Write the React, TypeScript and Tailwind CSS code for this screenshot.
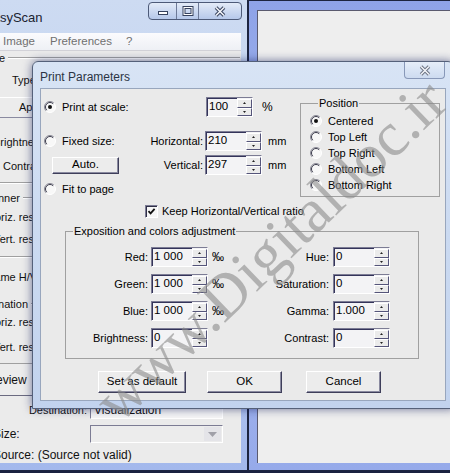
import React from "react";

function Radio({ checked = false }: { checked?: boolean }) {
  return (
    <svg width="12" height="12" viewBox="0 0 12 12" className="shrink-0">
      <circle cx="6" cy="6" r="5.5" fill="#f8f8f8" />
      <path d="M2.1 9.9A5.5 5.5 0 0 1 9.9 2.1" fill="none" stroke="#8a8a96" strokeWidth="1" />
      <path d="M2.8 9.2A4.5 4.5 0 0 1 9.2 2.8" fill="none" stroke="#3c3c4c" strokeWidth="1" />
      <path d="M9.9 2.1A5.5 5.5 0 0 1 2.1 9.9" fill="none" stroke="#ffffff" strokeWidth="1" />
      {checked && <circle cx="6" cy="6" r="2" fill="#111" />}
    </svg>
  );
}

function SpinArrow({ up = false }: { up?: boolean }) {
  return (
    <div className="flex flex-1 items-center justify-center border border-t-white border-l-white border-r-[#55557a] border-b-[#55557a] bg-[#ebebeb]">
      <svg width="3" height="2" viewBox="0 0 3 2">
        <path d={up ? "M1.5 0L3 2H0Z" : "M0 0H3L1.5 2Z"} fill="#222" />
      </svg>
    </div>
  );
}

function Spin({ value, w }: { value: string; w: string }) {
  return (
    <div className={`flex h-[20px] shrink-0 border border-t-[#7c7c94] border-l-[#7c7c94] border-r-white border-b-white ${w}`}>
      <div className="flex-1 bg-[#f3f3f5] pl-[2px] pt-[2px] text-[11.5px] leading-[13px] text-black shadow-[inset_1px_1px_0_#34345a]">
        {value}
      </div>
      <div className="flex w-[15px] flex-col bg-[#f3f3f5] pt-[1px]">
        <SpinArrow up />
        <SpinArrow />
      </div>
    </div>
  );
}

function Btn({ label, w, h = "h-[22px]" }: { label: string; w: string; h?: string }) {
  return (
    <div
      className={`flex shrink-0 items-center justify-center border border-t-white border-l-white border-b-[#3e3e5a] border-r-[#3e3e5a] bg-[#ececec] text-[11.5px] shadow-[inset_-1px_-1px_0_#8a8aa0] ${w} ${h}`}
    >
      {label}
    </div>
  );
}

function Glyph({ kind }: { kind: "min" | "max" | "close" }) {
  if (kind === "min")
    return (
      <svg width="12" height="10" viewBox="0 0 12 10">
        <rect x="1.5" y="5.5" width="9" height="3" fill="#fff" stroke="#36425e" />
      </svg>
    );
  if (kind === "max")
    return (
      <svg width="12" height="10" viewBox="0 0 12 10">
        <rect x="2" y="1.5" width="8" height="7" fill="none" stroke="#36425e" strokeWidth="3" />
        <rect x="2" y="1.5" width="8" height="7" fill="none" stroke="#fff" strokeWidth="1" />
      </svg>
    );
  return (
    <svg width="14" height="11" viewBox="0 0 14 11">
      <path d="M3 1.5L11 9.5M11 1.5L3 9.5" stroke="#36425e" strokeWidth="3.6" />
      <path d="M3 1.5L11 9.5M11 1.5L3 9.5" stroke="#f4f6fa" strokeWidth="1.6" />
    </svg>
  );
}

function GroupRow({
  label,
  value,
  unit,
  label2,
  value2,
}: {
  label: string;
  value: string;
  unit?: string;
  label2: string;
  value2: string;
}) {
  return (
    <div className="flex h-[20px] items-center">
      <span className="w-[82px] text-right">{label}</span>
      <div className="ml-[3px]">
        <Spin value={value} w="w-[57px]" />
      </div>
      <span className="ml-[4px] w-[20px] text-[12px]">{unit}</span>
      <span className="w-[97px] text-right">{label2}</span>
      <div className="ml-[4px]">
        <Spin value={value2} w="w-[57px]" />
      </div>
    </div>
  );
}

function EtchedLine() {
  return <div className="h-[2px] shrink-0 border-t border-b border-t-[#a0a0a0] border-b-white" />;
}

function BgLabel({ text, ml, mt }: { text: string; ml: string; mt: string }) {
  return <div className={`h-[14px] shrink-0 whitespace-nowrap leading-[14px] ${ml} ${mt}`}>{text}</div>;
}

export default function App() {
  return (
    <div className="relative h-[473px] w-[450px] overflow-hidden bg-[#1a2240] font-['Liberation_Sans',Arial,sans-serif] text-[11px] text-black">
      {/* EasyScan main window (left) */}
      <div className="absolute left-[-60px] top-0 flex h-[471px] w-[308px] flex-col border-r border-b border-[#1c2440] bg-gradient-to-b from-[#cddbf2] via-[#bfd0ef] to-[#a3b8ec]">
        <div className="flex h-[33px] shrink-0 items-start">
          <span className="ml-[44px] mt-[8px] text-[13px] text-[#1b2330]">EasyScan</span>
          <div className="ml-auto mr-[5px] mt-[2px] flex h-[18px] overflow-hidden rounded-[4px] border border-[#4d5a78] bg-gradient-to-b from-[#e3ebf8] to-[#b6c8ea]">
            <div className="flex w-[28px] items-center justify-center border-r border-[#6d7a98]">
              <Glyph kind="min" />
            </div>
            <div className="flex w-[22px] items-center justify-center border-r border-[#6d7a98]">
              <Glyph kind="max" />
            </div>
            <div className="flex w-[42px] items-center justify-center">
              <Glyph kind="close" />
            </div>
          </div>
        </div>
        <div className="mr-[6px] mb-[7px] flex flex-1 flex-col overflow-hidden bg-[#ebebeb] text-[#111]">
          <div className="flex h-[18px] shrink-0 items-center border-b border-[#d2d2d8] bg-gradient-to-b from-[#fbfbfd] to-[#eef0f5] text-[11.5px] text-[#707070]">
            <span className="ml-[63px]">Image</span>
            <span className="ml-[15px]">Preferences</span>
            <span className="ml-[14px]">?</span>
          </div>
          <div className="flex h-[14px] shrink-0 items-center">
            <span className="w-[65px] text-right leading-[14px]">Source</span>
            <div className="ml-[3px] mr-[1px] h-[2px] flex-1 border-t border-b border-t-[#a0a0a0] border-b-white" />
          </div>
          <BgLabel text="Type:" ml="ml-[72px]" mt="mt-[8px]" />
          <div className="mt-[10px] flex h-[21px] shrink-0 items-center border border-t-white border-b-[#8a8aa0] bg-[#ececec] pl-[78px]">
            Apply
          </div>
          <BgLabel text="Brightness" ml="ml-[53px]" mt="mt-[17px]" />
          <BgLabel text="Contrast" ml="ml-[63px]" mt="mt-[10px]" />
          <div className="mt-[9px]">
            <EtchedLine />
          </div>
          <div className="mt-[7px] flex h-[14px] shrink-0 items-center">
            <span className="ml-[39px] leading-[14px]">Scanner</span>
            <div className="ml-[3px] mr-[1px] h-[2px] flex-1 border-t border-b border-t-[#a0a0a0] border-b-white" />
          </div>
          <BgLabel text="Horiz. resolution" ml="ml-[47px]" mt="mt-[5px]" />
          <BgLabel text="Vert. resolution" ml="ml-[53px]" mt="mt-[8px]" />
          <div className="mt-[10px]">
            <EtchedLine />
          </div>
          <BgLabel text="Same H/V resolution" ml="ml-[47px]" mt="mt-[12px]" />
          <div className="mt-[13px] flex h-[14px] shrink-0 items-center">
            <span className="ml-[33px] leading-[14px]">Destination</span>
            <div className="ml-[3px] mr-[1px] h-[2px] flex-1 border-t border-b border-t-[#a0a0a0] border-b-white" />
          </div>
          <BgLabel text="Horiz. resolution" ml="ml-[47px]" mt="mt-[4px]" />
          <BgLabel text="Vert. resolution" ml="ml-[53px]" mt="mt-[11px]" />
          <div className="mt-[9px] flex h-[33px] shrink-0 items-center border border-t-[#a0a0a0] border-b-[#6a6a80] bg-[#ececec] pl-[43px] text-[12px]">
            Preview
          </div>
          <div className="mt-[5px] flex h-[18px] shrink-0 items-center">
            <span className="ml-[87px] w-[60px] whitespace-nowrap text-right text-[11px]">Destination:</span>
            <div className="ml-[3px] flex h-[18px] w-[133px] items-center border border-t-[#7c7c94] border-l-[#7c7c94] border-b-white border-r-white bg-[#f6f6f6] pl-[3px] text-[12px]">
              Visualization
            </div>
          </div>
          <div className="mt-[6px] flex h-[18px] shrink-0 items-center">
            <span className="ml-[53px] w-[97px] text-[12px]">Size:</span>
            <div className="flex h-[18px] w-[133px] items-center justify-end border border-t-[#7c7c94] border-l-[#7c7c94] border-b-white border-r-white bg-[#ececec] pr-[1px]">
              <div className="flex h-[14px] w-[17px] items-center justify-center bg-[#e4e4e8]">
                <svg width="9" height="5" viewBox="0 0 9 5">
                  <path d="M0 0H9L4.5 5Z" fill="#a0a0a8" />
                </svg>
              </div>
            </div>
          </div>
          <div className="mt-[5px] h-[14px] shrink-0 pl-[53px] text-[12px] leading-[14px]">Source: (Source not valid)</div>
        </div>
      </div>

      {/* second window (right) */}
      <div className="absolute left-[248px] top-0 flex h-[471px] w-[210px] flex-col border-l border-t border-b border-[#1c2440] bg-gradient-to-b from-[#8ea3e8] via-[#a8b9ee] to-[#96aaea] pl-[8px] pt-[9px] pb-[7px]">
        <div className="flex-1 border-t border-l border-[#5a5a6e] bg-[#eeeeee]" />
      </div>

      {/* Print Parameters dialog */}
      <div className="absolute left-[32px] top-[61px] flex h-[348px] w-[422px] flex-col rounded-t-[6px] border border-[#55617a] bg-gradient-to-b from-[#d8e4f5] via-[#cbdaf1] to-[#c2d3ee] shadow-[0_0_10px_rgba(20,30,90,0.6)]">
        <div className="flex h-[26px] shrink-0 items-start justify-between pl-[7px] pr-[8px]">
          <span className="mt-[6px] text-[12px] text-[#2c3444]">Print Parameters</span>
          <div className="flex h-[17px] w-[41px] items-center justify-center rounded-b-[4px] border border-t-0 border-[#8898b8] bg-gradient-to-b from-[#e6eef9] to-[#cddbf0]">
            <svg width="14" height="11" viewBox="0 0 14 11">
              <path d="M3 1.5L11 9.5M11 1.5L3 9.5" stroke="#6a7282" strokeWidth="3.4" />
              <path d="M3 1.5L11 9.5M11 1.5L3 9.5" stroke="#f4f6fa" strokeWidth="1.5" />
            </svg>
          </div>
        </div>
        <div className="mx-[7px] mb-[7px] flex flex-1 flex-col border border-[#98a6bd] bg-[#eaeaea] pt-[8px]">
          {/* top section */}
          <div className="flex">
            <div className="flex w-[259px] flex-col">
              <div className="flex h-[20px] items-center">
                <div className="ml-[3px] flex w-[161px] items-center gap-[6px]">
                  <Radio checked />
                  <span>Print at scale:</span>
                </div>
                <div className="ml-[1px]">
                  <Spin value="100" w="w-[47px]" />
                </div>
                <span className="ml-[9px] text-[12px]">%</span>
              </div>
              <div className="mt-[14px] flex h-[20px] items-center">
                <div className="ml-[3px] flex w-[161px] items-center gap-[6px]">
                  <Radio />
                  <span>Fixed size:</span>
                  <span className="ml-auto pr-[2px]">Horizontal:</span>
                </div>
                <Spin value="210" w="w-[57px]" />
                <span className="ml-[6px]">mm</span>
              </div>
              <div className="mt-[4px] flex h-[20px] items-center">
                <div className="ml-[3px] flex w-[161px] items-center">
                  <div className="ml-[8px]">
                    <Btn label="Auto." w="w-[67px]" h="h-[17px]" />
                  </div>
                  <span className="ml-auto pr-[2px]">Vertical:</span>
                </div>
                <Spin value="297" w="w-[57px]" />
                <span className="ml-[6px]">mm</span>
              </div>
              <div className="mt-[4px] flex h-[20px] items-center">
                <div className="ml-[3px] flex items-center gap-[6px]">
                  <Radio />
                  <span>Fit to page</span>
                </div>
              </div>
            </div>
            <fieldset className="h-[100px] w-[140px] border border-[#a0a0a0] pt-[3px] pl-[9px]">
              <legend className="ml-[8px] px-[1px] leading-[13px]">Position</legend>
              {["Centered", "Top Left", "Top Right", "Bottom Left", "Bottom Right"].map((p, i) => (
                <div key={p} className="flex h-[16px] items-center gap-[6px]">
                  <Radio checked={i === 0} />
                  <span>{p}</span>
                </div>
              ))}
            </fieldset>
          </div>

          {/* keep ratio */}
          <div className="mt-[2px] flex h-[20px] items-center pl-[104px]">
            <span className="flex h-[13px] w-[13px] items-center justify-center border border-t-[#7c7c94] border-l-[#7c7c94] border-b-white border-r-white bg-[#f6f6f6] shadow-[inset_1px_1px_0_#303048]">
              <svg width="9" height="9" viewBox="0 0 9 9">
                <path d="M1.5 4.2L3.6 6.4L7.6 1.8" fill="none" stroke="#111" strokeWidth="1.8" />
              </svg>
            </span>
            <span className="ml-[4px]">Keep Horizontal/Vertical ratio</span>
          </div>

          {/* exposition group */}
          <fieldset className="ml-[24px] mt-[4px] h-[134px] w-[354px] border border-[#a0a0a0]">
            <legend className="ml-[7px] px-[1px] leading-[13px]">Exposition and colors adjustment</legend>
            <div className="mt-[9px] flex flex-col gap-[7px]">
              <GroupRow label="Red:" value="1 000" unit="‰" label2="Hue:" value2="0" />
              <GroupRow label="Green:" value="1 000" unit="‰" label2="Saturation:" value2="0" />
              <GroupRow label="Blue:" value="1 000" unit="‰" label2="Gamma:" value2="1.000" />
              <GroupRow label="Brightness:" value="0" label2="Contrast:" value2="0" />
            </div>
          </fieldset>

          {/* buttons */}
          <div className="mt-[12px] flex">
            <div className="ml-[57px]">
              <Btn label="Set as default" w="w-[88px]" />
            </div>
            <div className="ml-[21px]">
              <Btn label="OK" w="w-[75px]" />
            </div>
            <div className="ml-[24px]">
              <Btn label="Cancel" w="w-[75px]" />
            </div>
          </div>
        </div>
      </div>

      {/* watermark */}
      <div className="pointer-events-none absolute left-[30px] top-[214px] w-[480px] -rotate-[44deg] whitespace-nowrap text-center font-['Liberation_Serif',serif] text-[62px] leading-[72px] text-[#8c8c8c] opacity-60">
        www.Digitaldoc.ir
      </div>
    </div>
  );
}
